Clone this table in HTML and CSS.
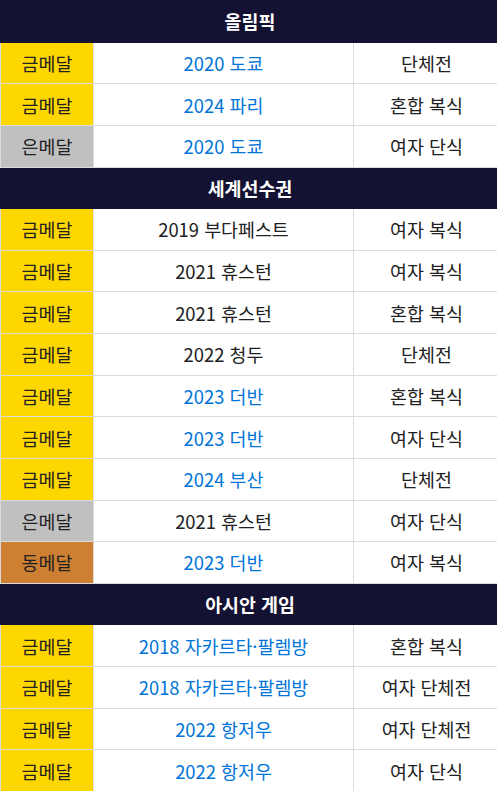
FILE: index.html
```html
<!DOCTYPE html>
<html lang="ko">
<head>
<meta charset="utf-8">
<link rel="stylesheet" href="styles.css">
</head>
<body>
<table class="medals">
  <colgroup>
    <col class="c-medal">
    <col class="c-event">
    <col class="c-kind">
  </colgroup>
  <tbody>
    <tr class="group"><th colspan="3">올림픽</th></tr>
    <tr><td class="gold">금메달</td><td class="link">2020 도쿄</td><td>단체전</td></tr>
    <tr><td class="gold">금메달</td><td class="link">2024 파리</td><td>혼합 복식</td></tr>
    <tr><td class="silver">은메달</td><td class="link">2020 도쿄</td><td>여자 단식</td></tr>
    <tr class="group"><th colspan="3">세계선수권</th></tr>
    <tr><td class="gold">금메달</td><td>2019 부다페스트</td><td>여자 복식</td></tr>
    <tr><td class="gold">금메달</td><td>2021 휴스턴</td><td>여자 복식</td></tr>
    <tr><td class="gold">금메달</td><td>2021 휴스턴</td><td>혼합 복식</td></tr>
    <tr><td class="gold">금메달</td><td>2022 청두</td><td>단체전</td></tr>
    <tr><td class="gold">금메달</td><td class="link">2023 더반</td><td>혼합 복식</td></tr>
    <tr><td class="gold">금메달</td><td class="link">2023 더반</td><td>여자 단식</td></tr>
    <tr><td class="gold">금메달</td><td class="link">2024 부산</td><td>단체전</td></tr>
    <tr><td class="silver">은메달</td><td>2021 휴스턴</td><td>여자 단식</td></tr>
    <tr><td class="bronze">동메달</td><td class="link">2023 더반</td><td>여자 복식</td></tr>
    <tr class="group"><th colspan="3">아시안 게임</th></tr>
    <tr><td class="gold">금메달</td><td class="link">2018 자카르타·팔렘방</td><td>혼합 복식</td></tr>
    <tr><td class="gold">금메달</td><td class="link">2018 자카르타·팔렘방</td><td>여자 단체전</td></tr>
    <tr><td class="gold">금메달</td><td class="link">2022 항저우</td><td>여자 단체전</td></tr>
    <tr><td class="gold">금메달</td><td class="link">2022 항저우</td><td>여자 단식</td></tr>
  </tbody>
</table>
</body>
</html>
```
FILE: styles.css
```css
html, body {
  margin: 0;
  padding: 0;
  background: #ffffff;
}

body {
  font-family: "Noto Sans CJK KR", "Noto Sans", sans-serif;
  font-size: 18.4px;
  color: #212121;
}

.medals {
  border-collapse: collapse;
  table-layout: fixed;
  width: 499px;
  border-left: 1px solid #131233;
}

.c-medal { width: 93px; }
.c-event { width: 260px; }
.c-kind { width: 146px; }

.medals th,
.medals td {
  height: 41.63px;
  box-sizing: border-box;
  padding: 0 4px;
  text-align: center;
  vertical-align: middle;
  line-height: 24px;
  border: 1px solid #dcdcdc;
  white-space: nowrap;
}

.group th {
  background: #131233;
  color: #ffffff;
  font-weight: 700;
  border-color: #131233;
}

.gold { background: #ffd700; }
.silver { background: #c0c0c0; }
.bronze { background: #cd7f32; }

.link { color: #0275d8; }
```
